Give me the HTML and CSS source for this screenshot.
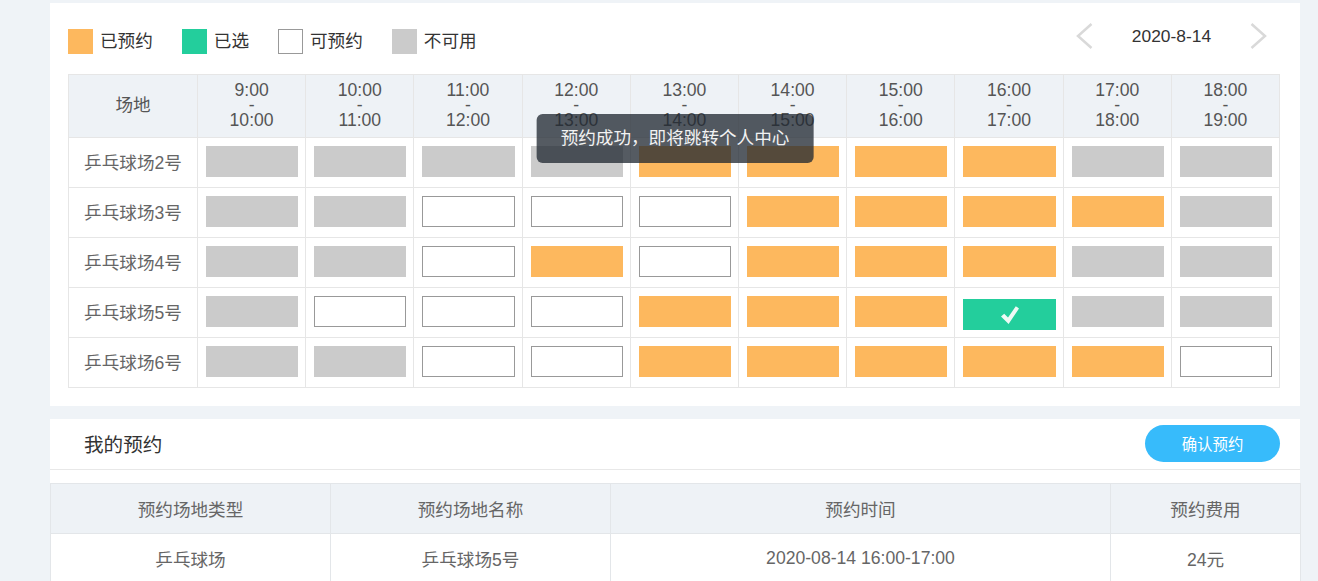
FILE: index.html
```html
<!DOCTYPE html>
<html lang="zh-CN">
<head>
<meta charset="utf-8">
<title>场地预约</title>
<link rel="stylesheet" href="styles.css">
</head>
<body>
<div class="page">
  <section class="panel schedule">
    <div class="toolbar">
      <ul class="legend">
        <li class="legend-item"><span class="swatch swatch--booked"></span>已预约</li>
        <li class="legend-item"><span class="swatch swatch--selected"></span>已选</li>
        <li class="legend-item"><span class="swatch swatch--free"></span>可预约</li>
        <li class="legend-item"><span class="swatch swatch--off"></span>不可用</li>
      </ul>
      <div class="date-nav">
        <button class="nav-btn" aria-label="上一天"><svg width="18" height="26" viewBox="0 0 18 26"><polyline points="16.5,1 3,13 16.5,25" fill="none" stroke="#d9d9d9" stroke-width="2.5"/></svg></button>
        <span class="date">2020-8-14</span>
        <button class="nav-btn" aria-label="下一天"><svg width="18" height="26" viewBox="0 0 18 26"><polyline points="1.5,1 15,13 1.5,25" fill="none" stroke="#d9d9d9" stroke-width="2.5"/></svg></button>
      </div>
    </div>

    <div class="grid">
      <div class="cell head">场地</div>
      <div class="cell head">9:00<br>-<br>10:00</div>
      <div class="cell head">10:00<br>-<br>11:00</div>
      <div class="cell head">11:00<br>-<br>12:00</div>
      <div class="cell head">12:00<br>-<br>13:00</div>
      <div class="cell head">13:00<br>-<br>14:00</div>
      <div class="cell head">14:00<br>-<br>15:00</div>
      <div class="cell head">15:00<br>-<br>16:00</div>
      <div class="cell head">16:00<br>-<br>17:00</div>
      <div class="cell head">17:00<br>-<br>18:00</div>
      <div class="cell head">18:00<br>-<br>19:00</div>

      <div class="cell label">乒乓球场2号</div>
      <div class="cell slot"><div class="block off"></div></div>
      <div class="cell slot"><div class="block off"></div></div>
      <div class="cell slot"><div class="block off"></div></div>
      <div class="cell slot"><div class="block off"></div></div>
      <div class="cell slot"><div class="block booked"></div></div>
      <div class="cell slot"><div class="block booked"></div></div>
      <div class="cell slot"><div class="block booked"></div></div>
      <div class="cell slot"><div class="block booked"></div></div>
      <div class="cell slot"><div class="block off"></div></div>
      <div class="cell slot"><div class="block off"></div></div>

      <div class="cell label">乒乓球场3号</div>
      <div class="cell slot"><div class="block off"></div></div>
      <div class="cell slot"><div class="block off"></div></div>
      <div class="cell slot"><div class="block free"></div></div>
      <div class="cell slot"><div class="block free"></div></div>
      <div class="cell slot"><div class="block free"></div></div>
      <div class="cell slot"><div class="block booked"></div></div>
      <div class="cell slot"><div class="block booked"></div></div>
      <div class="cell slot"><div class="block booked"></div></div>
      <div class="cell slot"><div class="block booked"></div></div>
      <div class="cell slot"><div class="block off"></div></div>

      <div class="cell label">乒乓球场4号</div>
      <div class="cell slot"><div class="block off"></div></div>
      <div class="cell slot"><div class="block off"></div></div>
      <div class="cell slot"><div class="block free"></div></div>
      <div class="cell slot"><div class="block booked"></div></div>
      <div class="cell slot"><div class="block free"></div></div>
      <div class="cell slot"><div class="block booked"></div></div>
      <div class="cell slot"><div class="block booked"></div></div>
      <div class="cell slot"><div class="block booked"></div></div>
      <div class="cell slot"><div class="block off"></div></div>
      <div class="cell slot"><div class="block off"></div></div>

      <div class="cell label">乒乓球场5号</div>
      <div class="cell slot"><div class="block off"></div></div>
      <div class="cell slot"><div class="block free"></div></div>
      <div class="cell slot"><div class="block free"></div></div>
      <div class="cell slot"><div class="block free"></div></div>
      <div class="cell slot"><div class="block booked"></div></div>
      <div class="cell slot"><div class="block booked"></div></div>
      <div class="cell slot"><div class="block booked"></div></div>
      <div class="cell slot"><div class="block selected"><svg width="20" height="20" viewBox="0 0 20 20"><path d="M1 11.5 L4.2 8.8 L8 12.6 L15.8 1.2 L19 3.6 L8.6 19 Z" fill="#eefaf5"/></svg></div></div>
      <div class="cell slot"><div class="block off"></div></div>
      <div class="cell slot"><div class="block off"></div></div>

      <div class="cell label">乒乓球场6号</div>
      <div class="cell slot"><div class="block off"></div></div>
      <div class="cell slot"><div class="block off"></div></div>
      <div class="cell slot"><div class="block free"></div></div>
      <div class="cell slot"><div class="block free"></div></div>
      <div class="cell slot"><div class="block booked"></div></div>
      <div class="cell slot"><div class="block booked"></div></div>
      <div class="cell slot"><div class="block booked"></div></div>
      <div class="cell slot"><div class="block booked"></div></div>
      <div class="cell slot"><div class="block booked"></div></div>
      <div class="cell slot"><div class="block free"></div></div>
    </div>

    <div class="toast">预约成功，即将跳转个人中心</div>
  </section>

  <section class="panel mine">
    <div class="mine-head">
      <h2 class="mine-title">我的预约</h2>
      <button class="confirm-btn">确认预约</button>
    </div>
    <table class="orders">
      <thead>
        <tr>
          <th class="col-type">预约场地类型</th>
          <th class="col-name">预约场地名称</th>
          <th class="col-time">预约时间</th>
          <th class="col-fee">预约费用</th>
        </tr>
      </thead>
      <tbody>
        <tr>
          <td>乒乓球场</td>
          <td>乒乓球场5号</td>
          <td>2020-08-14 16:00-17:00</td>
          <td>24元</td>
        </tr>
      </tbody>
    </table>
  </section>
</div>
</body>
</html>
```

FILE: styles.css
```css
* { box-sizing: border-box; }

html, body {
  margin: 0;
  background: #eff3f7;
  font-family: "Liberation Sans", "Noto Sans CJK SC", sans-serif;
  font-size: 17.6px;
  color: #333;
}

.page {
  padding: 3px 18px 0 50px;
}

.panel {
  background: #fff;
}

.schedule {
  position: relative;
  padding: 0 20px 18px 18px;
}

/* toolbar */
.toolbar {
  height: 71px;
  display: flex;
  justify-content: space-between;
  align-items: flex-start;
}

.legend {
  list-style: none;
  margin: 26px 0 0;
  padding: 0;
  display: flex;
}

.legend-item {
  display: flex;
  align-items: center;
  gap: 7px;
  height: 25px;
  line-height: 25px;
  margin-right: 29px;
  color: #333;
}

.swatch {
  width: 25px;
  height: 25px;
  display: block;
}
.swatch--booked { background: #fdb85e; }
.swatch--selected { background: #23ce9c; }
.swatch--free { background: #fff; border: 1px solid #999; }
.swatch--off { background: #cbcbcb; }

.date-nav {
  margin: 20px 12px 0 0;
  height: 26px;
  display: flex;
  align-items: center;
}

.nav-btn {
  border: 0;
  background: none;
  padding: 0;
  width: 18px;
  height: 26px;
  display: block;
  cursor: pointer;
}
.nav-btn svg { display: block; }

.date {
  width: 157px;
  text-align: center;
  line-height: 26px;
  font-size: 17.4px;
  color: #333;
}

/* grid */
.grid {
  display: grid;
  grid-template-columns: 129px repeat(10, 1fr);
  grid-template-rows: 63px repeat(5, 50px);
  border-top: 1px solid #e6e6e6;
  border-left: 1px solid #e6e6e6;
}

.cell {
  border-right: 1px solid #e6e6e6;
  border-bottom: 1px solid #e6e6e6;
}

.head {
  background: #eef2f6;
  color: #555;
  text-align: center;
  line-height: 14.8px;
  display: flex;
  align-items: center;
  justify-content: center;
  padding-bottom: 1px;
}

.label {
  color: #666;
  display: flex;
  align-items: center;
  justify-content: center;
  padding-bottom: 3px;
}

.slot {
  padding: 8px 7px 0 8px;
}

.block {
  height: 31px;
  width: 100%;
}
.block.off { background: #cbcbcb; }
.block.booked { background: #fdb85e; }
.block.free { background: #fff; border: 1px solid #999; }
.block.selected {
  background: #23ce9c;
  margin-top: 3px;
  display: flex;
  align-items: center;
  justify-content: center;
  padding-left: 1px;
}
.block.selected svg { display: block; }

/* toast */
.toast {
  position: absolute;
  top: 111px;
  left: 50%;
  transform: translateX(-50%);
  height: 49px;
  line-height: 49px;
  padding: 0 24px;
  border-radius: 6px;
  background: rgba(32, 40, 48, 0.76);
  color: #f2f2f2;
  white-space: nowrap;
}

/* my bookings */
.mine {
  margin-top: 13px;
  padding-bottom: 40px;
}

.mine-head {
  height: 51px;
  display: flex;
  align-items: center;
  justify-content: space-between;
  padding: 0 20px 2px 34px;
  border-bottom: 1px solid #e8e8e8;
}

.mine-title {
  margin: 0;
  font-size: 19.6px;
  font-weight: normal;
  color: #333;
}

.confirm-btn {
  width: 135px;
  height: 37px;
  border: 0;
  border-radius: 19px;
  background: #37bbfb;
  color: #fff;
  font-family: inherit;
  font-size: 15.4px;
  cursor: pointer;
}

.orders {
  margin-top: 13px;
  width: 100%;
  border-collapse: collapse;
  table-layout: fixed;
}

.orders th,
.orders td {
  height: 50px;
  border: 1px solid #e3e6e9;
  text-align: center;
  color: #666;
  font-weight: normal;
  padding: 0;
}

.orders th { background: #eef2f6; }

.col-type { width: 280px; }
.col-name { width: 280px; }
.col-time { width: 500px; }
.col-fee { width: 190px; }
```
